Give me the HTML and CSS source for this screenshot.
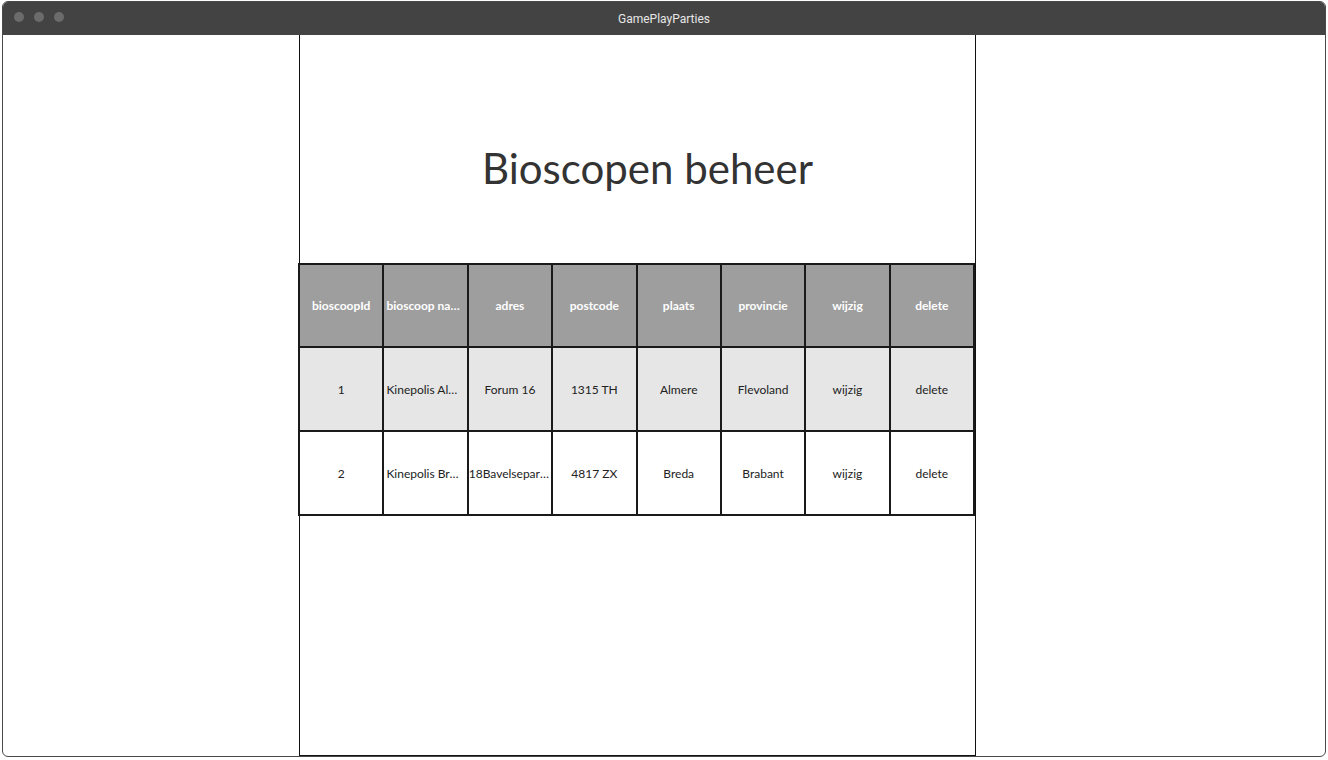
FILE: index.html
```html
<!DOCTYPE html>
<html lang="nl">
<head>
    <meta charset="UTF-8">
    <title>GamePlayParties</title>
    <link rel="stylesheet" href="styles.css">
</head>
<body>
<div class="window">
    <div class="titlebar">
        <div class="dots">
            <span></span>
            <span></span>
            <span></span>
        </div>
        <div class="title">GamePlayParties</div>
    </div>
    <div class="viewport">
        <div class="page">
            <h1>Bioscopen beheer</h1>
            <table class="grid">
                <thead>
                <tr>
                    <th>bioscoopId</th>
                    <th>bioscoop naam</th>
                    <th>adres</th>
                    <th>postcode</th>
                    <th>plaats</th>
                    <th>provincie</th>
                    <th>wijzig</th>
                    <th>delete</th>
                </tr>
                </thead>
                <tbody>
                <tr class="odd">
                    <td>1</td>
                    <td class="left">Kinepolis Almere</td>
                    <td>Forum 16</td>
                    <td>1315 TH</td>
                    <td>Almere</td>
                    <td>Flevoland</td>
                    <td>wijzig</td>
                    <td>delete</td>
                </tr>
                <tr>
                    <td>2</td>
                    <td class="left">Kinepolis Breda</td>
                    <td class="left tight">18Bavelseparklaan</td>
                    <td>4817 ZX</td>
                    <td>Breda</td>
                    <td>Brabant</td>
                    <td>wijzig</td>
                    <td>delete</td>
                </tr>
                </tbody>
            </table>
        </div>
    </div>
</div>
</body>
</html>
```

FILE: styles.css
```css
* {
    margin: 0;
    padding: 0;
    box-sizing: border-box;
}

html, body {
    width: 100%;
    height: 100%;
    background: #fff;
}

body {
    padding: 1px 2px 3px 2px;
}

.window {
    height: 756px;
    border: 1px solid #4a4a4a;
    border-radius: 6px;
    overflow: hidden;
    display: flex;
    flex-direction: column;
}

.titlebar {
    height: 33px;
    background: #434343;
    position: relative;
    display: flex;
    align-items: center;
    justify-content: center;
    flex-shrink: 0;
}

.dots {
    position: absolute;
    left: 11px;
    top: 10px;
    display: flex;
    gap: 10px;
}

.dots span {
    width: 10px;
    height: 10px;
    border-radius: 50%;
    background: #6b6b6b;
}

.title {
    font-family: Roboto, "Liberation Sans", sans-serif;
    font-size: 12px;
    color: #e6e6e6;
}

.viewport {
    flex: 1;
    display: flex;
    padding-left: 296px;
}

.page {
    width: 677px;
    border: 1px solid #111;
    border-top: none;
}

h1 {
    font-family: Lato, "Open Sans", sans-serif;
    font-weight: normal;
    font-size: 42px;
    line-height: 50px;
    color: #333;
    text-align: center;
    margin: 108px 0 70px;
    padding-left: 20px;
}

.grid {
    width: 677px;
    margin-left: -2px;
    border-collapse: collapse;
    table-layout: fixed;
    font-family: Lato, "Open Sans", sans-serif;
    font-size: 12px;
}

.grid th,
.grid td {
    height: 84px;
    border: 2px solid #1a1a1a;
    padding: 0 2px;
    text-align: center;
    white-space: nowrap;
    overflow: hidden;
    text-overflow: ellipsis;
}

.grid th {
    height: 83px;
    background: #9e9e9e;
    color: #fff;
    font-weight: bold;
}

.grid td {
    color: #222;
}

.grid td.left {
    text-align: left;
}

.grid td.tight {
    padding: 0;
}

.grid tr.odd td {
    background: #e6e6e6;
}
```
